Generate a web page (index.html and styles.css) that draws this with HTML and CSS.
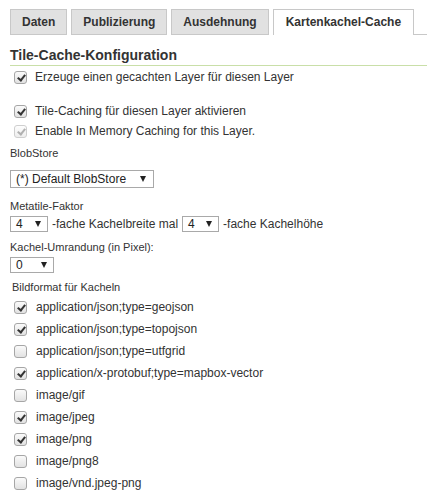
FILE: index.html
```html
<!DOCTYPE html>
<html>
<head>
<meta charset="utf-8">
<link rel="stylesheet" href="styles.css">
</head>
<body>
<div class="page">
  <div class="tabs">
    <div class="tab">Daten</div>
    <div class="tab">Publizierung</div>
    <div class="tab">Ausdehnung</div>
    <div class="tab active">Kartenkachel-Cache</div>
    <div class="tab-fill"></div>
  </div>
  <h2 class="title">Tile-Cache-Konfiguration</h2>
  <div class="check first"><span class="cb on"></span><span>Erzeuge einen gecachten Layer für diesen Layer</span></div>
  <div class="check spaced"><span class="cb on"></span><span>Tile-Caching für diesen Layer aktivieren</span></div>
  <div class="check"><span class="cb on dis"></span><span>Enable In Memory Caching for this Layer.</span></div>
  <div class="label blob">BlobStore</div>
  <div class="select big"><span>(*) Default BlobStore</span><span class="arrow"></span></div>
  <div class="label meta">Metatile-Faktor</div>
  <div class="inline">
    <div class="select w38"><span>4</span><span class="arrow"></span></div>
    <span class="txt">-fache Kachelbreite mal</span>
    <div class="select w37"><span>4</span><span class="arrow"></span></div>
    <span class="txt">-fache Kachelhöhe</span>
  </div>
  <div class="label border">Kachel-Umrandung (in Pixel):</div>
  <div class="select w44 solo"><span>0</span><span class="arrow"></span></div>
  <div class="label sub">Bildformat für Kacheln</div>
  <ul class="formats">
    <li class="check"><span class="cb on"></span><span>application/json;type=geojson</span></li>
    <li class="check"><span class="cb on"></span><span>application/json;type=topojson</span></li>
    <li class="check"><span class="cb"></span><span>application/json;type=utfgrid</span></li>
    <li class="check"><span class="cb on"></span><span>application/x-protobuf;type=mapbox-vector</span></li>
    <li class="check"><span class="cb"></span><span>image/gif</span></li>
    <li class="check"><span class="cb on"></span><span>image/jpeg</span></li>
    <li class="check"><span class="cb on"></span><span>image/png</span></li>
    <li class="check"><span class="cb"></span><span>image/png8</span></li>
    <li class="check"><span class="cb"></span><span>image/vnd.jpeg-png</span></li>
  </ul>
</div>
</body>
</html>
```
FILE: styles.css
```css
html, body { margin: 0; padding: 0; background: #fff; }
body { font-family: "Liberation Sans", Arial, sans-serif; color: #333; font-size: 12px; }
.page { padding: 9px 0 0 10px; }

.tabs { display: flex; gap: 4px; height: 26px; }
.tab { box-sizing: border-box; height: 26px; line-height: 24px; padding: 0 11px; background: #e1e1e1; border: 1px solid #c8c8c8; font-weight: bold; font-size: 12px; color: #333; white-space: nowrap; }
.tab.active { background: #fff; border-bottom: none; padding: 0 12px; line-height: 25px; }
.tab-fill { flex: 1; box-sizing: border-box; height: 26px; border-bottom: 1px solid #c8c8c8; margin-left: -4px; }

.title { margin: 11px 0 0 0; font-size: 14px; font-weight: bold; line-height: 18px; padding-bottom: 1px; border-bottom: 1px solid #c9dfa8; color: #333; }

.check { display: flex; align-items: center; height: 20px; gap: 8px; padding-left: 4px; font-size: 12px; }
.check.first { margin-top: 1px; }
.check.spaced { margin-top: 14px; }
.cb { box-sizing: border-box; width: 13px; height: 13px; border: 1px solid #a6a6a6; border-radius: 3px; background: linear-gradient(#fafafa, #e2e2e2); position: relative; flex: none; }
.cb.on::after { content: ""; position: absolute; left: 3.5px; top: 1px; width: 3px; height: 6px; border: solid #333; border-width: 0 2px 2px 0; transform: rotate(38deg); }
.cb.dis { border-color: #cfcfcf; background: linear-gradient(#fdfdfd, #eeeeee); }
.cb.dis::after { border-color: #b0b0b0; }

.label { font-size: 11px; line-height: 16px; }
.label.blob { margin-top: 4px; }
.label.meta { margin-top: 10px; }
.label.border { margin-top: 7px; }
.label.sub { margin-top: 6px; padding-left: 2px; }

.select { box-sizing: border-box; display: flex; align-items: center; justify-content: space-between; border: 1px solid #a9a9a9; background: #fff; height: 16px; padding: 0 6px 0 5px; font-size: 12px; color: #222; flex: none; }
.select.big { width: 144px; height: 18px; margin-top: 9px; padding: 0 7px 0 5px; font-size: 12px; }
.select.w38 { width: 38px; }
.select.w37 { width: 37px; }
.select.w44 { width: 44px; }
.select.solo { margin-top: 2px; }
.arrow { width: 0; height: 0; border-left: 3.5px solid transparent; border-right: 3.5px solid transparent; border-top: 6px solid #222; }

.inline { display: flex; align-items: center; gap: 4px; margin-top: 2px; height: 16px; font-size: 12px; }

.formats { list-style: none; margin: 1px 0 0 0; padding: 0; }
.formats .check { height: 22px; gap: 9px; }
```
